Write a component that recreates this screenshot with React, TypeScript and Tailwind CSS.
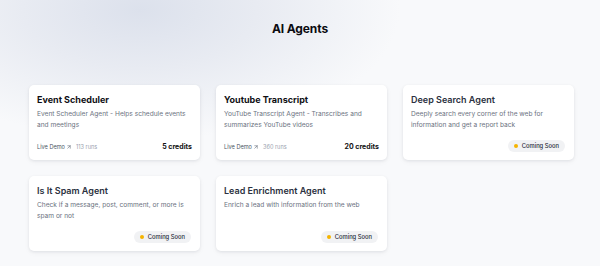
import { ArrowUpRight } from "lucide-react";

type Agent = {
  name: string;
  desc: string;
  dark?: boolean;
  runs?: number;
  credits?: number;
};

const agents: Agent[] = [
  {
    name: "Event Scheduler",
    desc: "Event Scheduler Agent - Helps schedule events and meetings",
    dark: true,
    runs: 113,
    credits: 5,
  },
  {
    name: "Youtube Transcript",
    desc: "YouTube Transcript Agent - Transcribes and summarizes YouTube videos",
    dark: true,
    runs: 360,
    credits: 20,
  },
  {
    name: "Deep Search Agent",
    desc: "Deeply search every corner of the web for information and get a report back",
  },
  {
    name: "Is It Spam Agent",
    desc: "Check if a message, post, comment, or more is spam or not",
  },
  {
    name: "Lead Enrichment Agent",
    desc: "Enrich a lead with information from the web",
  },
];

function AgentCard({ agent }: { agent: Agent }) {
  return (
    <div className="flex flex-col rounded-[5px] bg-white px-2 pt-2 pb-2 shadow-[0_1px_3px_rgba(15,23,42,0.08),0_2px_6px_rgba(15,23,42,0.04)]">
      <h2
        className={
          agent.dark
            ? "text-[9px] leading-[13px] font-bold text-[#0f0f14]"
            : "text-[9px] leading-[13px] font-semibold text-[#2b3140]"
        }
      >
        {agent.name}
      </h2>
      <p className="mt-[3px] flex-1 text-[6.6px] leading-[11px] text-[#6b7280]">{agent.desc}</p>
      {agent.credits ? (
        <div className="flex items-center justify-between">
          <div className="flex items-center gap-[4px] text-[5.6px]">
            <span className="flex items-center text-[#4b5563]">
              Live Demo
              <ArrowUpRight className="ml-[1px] h-[6px] w-[6px]" strokeWidth={2} />
            </span>
            <span className="text-[#9ca3af]">{agent.runs} runs</span>
          </div>
          <span className="text-[7px] font-bold text-[#111]">{agent.credits} credits</span>
        </div>
      ) : (
        <div className="flex justify-end pr-[1px]">
          <span className="flex h-[12px] items-center gap-[4px] rounded-full bg-[#f1f2f4] px-[6px] text-[5.8px] font-medium text-[#1f2937]">
            <span className="h-[3.5px] w-[3.5px] rounded-full bg-[#f5b400]" />
            Coming Soon
          </span>
        </div>
      )}
    </div>
  );
}

export default function App() {
  return (
    <div
      className="h-[266px] w-[600px] overflow-hidden bg-[#f8f9fb] bg-[radial-gradient(ellipse_260px_130px_at_140px_10px,#dce1ec_0%,#e8ebf2_45%,#f8f9fb_100%)]"
      style={{ fontFamily: "Inter, 'Noto Sans', sans-serif" }}
    >
      <h1 className="pt-[21px] text-center text-[12px] leading-[16px] font-bold tracking-[-0.01em] text-[#0b0b10]">
        AI Agents
      </h1>
      <div className="mt-[48px] ml-[29px] grid w-[545px] grid-cols-3 auto-rows-[75px] gap-4">
        {agents.map((a) => (
          <AgentCard key={a.name} agent={a} />
        ))}
      </div>
    </div>
  );
}
